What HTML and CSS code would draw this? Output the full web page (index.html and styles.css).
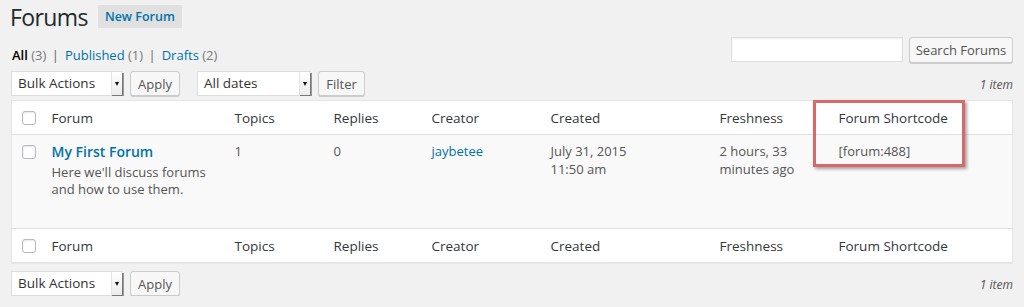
FILE: index.html
```html
<!DOCTYPE html>
<html lang="en">
<head>
  <meta charset="UTF-8" />
  <title>Forums</title>
  <link rel="stylesheet" href="styles.css">
</head>
<body>
  <div class="wrap">
    <div class="title-row">
      <h1>Forums</h1>
      <a class="page-action" href="#">New Forum</a>
    </div>

    <div class="top-row">
      <ul class="subsubsub">
        <li><b>All</b> <span class="count">(3)</span> <span class="sep">|</span></li>
        <li><a href="#">Published</a> <span class="count">(1)</span> <span class="sep">|</span></li>
        <li><a href="#">Drafts</a> <span class="count">(2)</span></li>
      </ul>
      <div class="search-box">
        <input type="text" class="search-input" />
        <button class="btn btn-search">Search Forums</button>
      </div>
    </div>

    <div class="tablenav">
      <div class="actions">
        <div class="select sel-bulk">Bulk Actions<span class="arrow"></span></div>
        <button class="btn btn-apply">Apply</button>
        <div class="select sel-dates">All dates<span class="arrow"></span></div>
        <button class="btn btn-filter">Filter</button>
      </div>
      <div class="num-items">1 item</div>
    </div>

    <div class="table-box">
      <table class="list">
        <colgroup>
          <col style="width:30px">
          <col style="width:183px">
          <col style="width:99px">
          <col style="width:98px">
          <col style="width:119px">
          <col style="width:169px">
          <col style="width:119px">
          <col>
        </colgroup>
        <thead>
          <tr>
            <th class="cb"><span class="check"></span></th>
            <th>Forum</th>
            <th>Topics</th>
            <th>Replies</th>
            <th>Creator</th>
            <th>Created</th>
            <th>Freshness</th>
            <th>Forum Shortcode</th>
          </tr>
        </thead>
        <tbody>
          <tr>
            <td class="cb"><span class="check"></span></td>
            <td>
              <a class="row-title" href="#">My First Forum</a>
              <div class="desc">Here we'll discuss forums and how to use them.</div>
            </td>
            <td>1</td>
            <td>0</td>
            <td><a href="#">jaybetee</a></td>
            <td>July 31, 2015<br>11:50 am</td>
            <td>2 hours, 33<br>minutes ago</td>
            <td>[forum:488]</td>
          </tr>
        </tbody>
        <tfoot>
          <tr>
            <th class="cb"><span class="check"></span></th>
            <th>Forum</th>
            <th>Topics</th>
            <th>Replies</th>
            <th>Creator</th>
            <th>Created</th>
            <th>Freshness</th>
            <th>Forum Shortcode</th>
          </tr>
        </tfoot>
      </table>
      <div class="highlight"></div>
    </div>

    <div class="tablenav bottom">
      <div class="actions">
        <div class="select sel-bulk">Bulk Actions<span class="arrow"></span></div>
        <button class="btn btn-apply">Apply</button>
      </div>
      <div class="num-items">1 item</div>
    </div>
  </div>
</body>
</html>
```

FILE: styles.css
```css
body {
  margin: 0;
  background: #f1f1f1;
  color: #444;
  font-family: "Open Sans", "Liberation Sans", sans-serif;
  font-size: 13px;
}
a {
  color: #0073aa;
  text-decoration: none;
}
.wrap {
  padding: 5px 11px 0 11px;
}
.title-row {
  display: flex;
  align-items: center;
  height: 25px;
}
h1 {
  margin: 0 0 0 -1px;
  font-size: 23px;
  font-weight: 400;
  line-height: 25px;
  letter-spacing: -0.6px;
  color: #23282d;
}
.page-action {
  margin-left: 10px;
  height: 23px;
  line-height: 23px;
  padding: 0 7px;
  background: #e0e0e0;
  font-weight: 600;
  font-size: 12.5px;
  margin-top: -2px;
}
.top-row {
  display: flex;
  justify-content: space-between;
  align-items: flex-end;
  margin-top: 7px;
  height: 26px;
}
.subsubsub {
  list-style: none;
  margin: 0 0 -1px 1px;
  padding: 0;
  display: flex;
  gap: 4px;
  line-height: 18px;
}
.subsubsub b {
  color: #000;
  font-weight: 600;
}
.count {
  color: #777;
}
.sep {
  color: #666;
  margin: 0 2px;
}
.search-box {
  display: flex;
  gap: 6px;
}
.search-input {
  width: 172px;
  height: 25px;
  box-sizing: border-box;
  border: 1px solid #ddd;
  background: #fff;
  box-shadow: inset 0 1px 2px rgba(0,0,0,.07);
  margin: 0;
}
.btn {
  font-family: "Open Sans", "Liberation Sans", sans-serif;
  font-size: 13px;
  color: #555;
  background: #f7f7f7;
  border: 1px solid #ccc;
  border-radius: 3px;
  box-shadow: 0 1px 0 #ccc;
  height: 25px;
  padding: 0;
  white-space: nowrap;
  box-sizing: border-box;
  margin: 0;
  cursor: pointer;
}
.btn-search {
  width: 104px;
  height: 26px;
}
.tablenav {
  display: flex;
  justify-content: space-between;
  align-items: center;
  margin-top: 8px;
  height: 25px;
}
.actions {
  display: flex;
  align-items: center;
}
.select {
  position: relative;
  height: 25px;
  line-height: 23px;
  box-sizing: border-box;
  border: 1px solid #ddd;
  background: #fff;
  color: #333;
  font-size: 13.5px;
  padding-left: 6px;
}
.select .arrow {
  position: absolute;
  right: 0;
  top: 0;
  bottom: 0;
  width: 10px;
  background: linear-gradient(#fff, #ececec);
  border-left: 1px solid #e4e4e4;
  box-shadow: 1px 1px 0 #777, 2px 1px 0 #999;
}
.select .arrow::after {
  content: "";
  position: absolute;
  left: 3px;
  top: 10px;
  border-left: 2.5px solid transparent;
  border-right: 2.5px solid transparent;
  border-top: 4px solid #111;
}
.sel-bulk {
  width: 112px;
}
.sel-dates {
  width: 114px;
  margin-left: 17px;
}
.btn-apply {
  width: 50px;
  margin-left: 7px;
}
.btn-filter {
  width: 47px;
  margin-left: 7px;
}
.num-items {
  font-style: italic;
  font-size: 12px;
  color: #555;
  padding-top: 1px;
}
.table-box {
  position: relative;
  margin-top: 4px;
}
.list {
  width: 100%;
  border-collapse: collapse;
  table-layout: fixed;
  background: #fff;
  border: 1px solid #e5e5e5;
  box-shadow: 0 1px 1px rgba(0,0,0,.04);
}
.list th {
  font-weight: 400;
  text-align: left;
  color: #32373c;
  font-size: 13.5px;
  height: 33px;
  padding: 0 10px;
}
.list thead tr {
  border-bottom: 1px solid #e1e1e1;
}
.list tfoot tr {
  border-top: 1px solid #e1e1e1;
}
.list tbody tr {
  background: #f9f9f9;
}
.list td {
  vertical-align: top;
  padding: 7px 10px 0 10px;
  height: 83px;
  line-height: 18px;
  font-size: 13px;
  color: #555;
}
.list .cb {
  padding: 0 0 0 10px;
}
.list td.cb {
  padding-top: 10px;
}
.check {
  display: block;
  width: 14px;
  height: 14px;
  box-sizing: border-box;
  border: 1px solid #b4b9be;
  border-radius: 3px;
  background: #fff;
  box-shadow: inset 0 1px 2px rgba(0,0,0,.1);
}
.row-title {
  font-weight: 600;
  font-size: 14px;
  display: block;
  line-height: 19px;
}
.desc {
  margin-top: 3px;
  line-height: 17px;
}
.highlight {
  position: absolute;
  left: 802px;
  top: 0;
  width: 152px;
  height: 67px;
  box-sizing: border-box;
  border: 3px solid #d9686a;
  box-shadow: 2px 2px 3px rgba(0,0,0,.35);
}
.tablenav.bottom {
  margin-top: 8px;
}
```
